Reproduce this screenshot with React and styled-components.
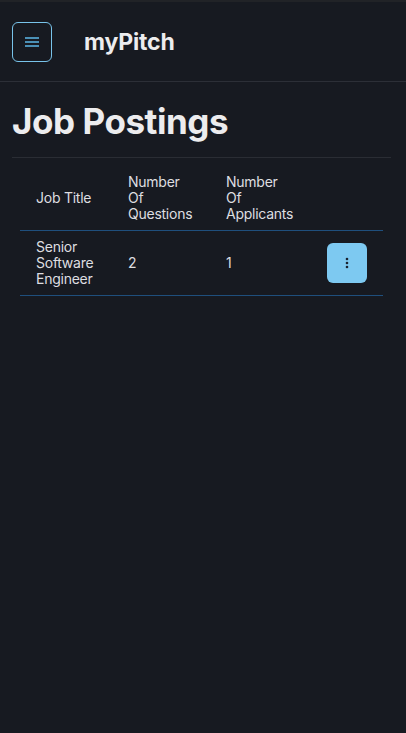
import React from "react";
import styled, { createGlobalStyle } from "styled-components";

const Global = createGlobalStyle`
  html, body { margin: 0; padding: 0; background: #171a21; }
  body { font-family: Inter, "Noto Sans", sans-serif; color: #e8e8ea; }
  * { box-sizing: border-box; }
`;

const Page = styled.div`
  min-height: 733px;
  background: #171a21;
  border-top: 2px solid #212327;
`;

const Header = styled.header`
  display: flex;
  align-items: center;
  height: 80px;
  padding: 0 12px;
  gap: 32px;
  border-bottom: 1px solid #2c2f37;
`;

const MenuButton = styled.button`
  width: 40px;
  height: 40px;
  border: 1px solid #78c3ea;
  border-radius: 6px;
  background: transparent;
  display: flex;
  align-items: center;
  justify-content: center;
  padding: 0;
  margin-top: 1px;
`;

const Brand = styled.div`
  font-size: 23px;
  font-weight: 700;
  color: #ececee;
  letter-spacing: -0.15px;
`;

const Main = styled.main`
  padding: 0 15px 0 12px;
`;

const Title = styled.h1`
  margin: 0;
  padding: 18px 0 15px;
  font-size: 35px;
  line-height: 42px;
  font-weight: 700;
  color: #ececee;
  border-bottom: 1px solid #2a2d34;
  letter-spacing: -0.45px;
`;

const TableWrap = styled.div`
  padding: 8px 8px 0;
`;

const Table = styled.table`
  width: 100%;
  border-collapse: collapse;
  font-size: 14px;
  line-height: 16px;
  color: #dedee0;
  letter-spacing: -0.25px;
`;

const HeadRow = styled.tr`
  border-bottom: 1px solid #1f4f7d;
`;

const BodyRow = styled.tr`
  border-bottom: 1px solid #1f4f7d;
`;

const Th = styled.th`
  text-align: left;
  font-weight: 400;
  padding: 8px 16px 8px ${(p) => (p.$first ? 16 : 0)}px;
  vertical-align: middle;
  width: ${(p) => p.$w || "auto"};
`;

const Td = styled.td`
  padding: 8px 16px 8px ${(p) => (p.$first ? 16 : 0)}px;
  vertical-align: middle;
  text-align: ${(p) => p.$align || "left"};
`;

const ActionButton = styled.button`
  width: 40px;
  height: 40px;
  border: none;
  border-radius: 6px;
  background: #7dc9f1;
  display: inline-flex;
  align-items: center;
  justify-content: center;
  padding: 0;
  vertical-align: middle;
`;

const HamburgerIcon = () => (
  <svg width="14" height="10" viewBox="0 0 14 10">
    <rect x="0" y="0" width="14" height="2" fill="#4b90b6" />
    <rect x="0" y="4" width="14" height="2" fill="#4b90b6" />
    <rect x="0" y="8" width="14" height="2" fill="#4b90b6" />
  </svg>
);

const KebabIcon = () => (
  <svg width="4" height="12" viewBox="0 0 4 12">
    <circle cx="2" cy="2" r="1.3" fill="#1a2330" />
    <circle cx="2" cy="6" r="1.3" fill="#1a2330" />
    <circle cx="2" cy="10" r="1.3" fill="#1a2330" />
  </svg>
);

export default function App() {
  return (
    <>
      <Global />
      <Page>
        <Header>
          <MenuButton aria-label="menu">
            <HamburgerIcon />
          </MenuButton>
          <Brand>myPitch</Brand>
        </Header>
        <Main>
          <Title>Job Postings</Title>
          <TableWrap>
            <Table>
              <thead>
                <HeadRow>
                  <Th $first $w="108px">Job Title</Th>
                  <Th $w="98px">
                    Number
                    <br />
                    Of
                    <br />
                    Questions
                  </Th>
                  <Th>
                    Number
                    <br />
                    Of
                    <br />
                    Applicants
                  </Th>
                  <Th />
                </HeadRow>
              </thead>
              <tbody>
                <BodyRow>
                  <Td $first>
                    Senior
                    <br />
                    Software
                    <br />
                    Engineer
                  </Td>
                  <Td>2</Td>
                  <Td>1</Td>
                  <Td $align="right">
                    <ActionButton aria-label="options">
                      <KebabIcon />
                    </ActionButton>
                  </Td>
                </BodyRow>
              </tbody>
            </Table>
          </TableWrap>
        </Main>
      </Page>
    </>
  );
}
